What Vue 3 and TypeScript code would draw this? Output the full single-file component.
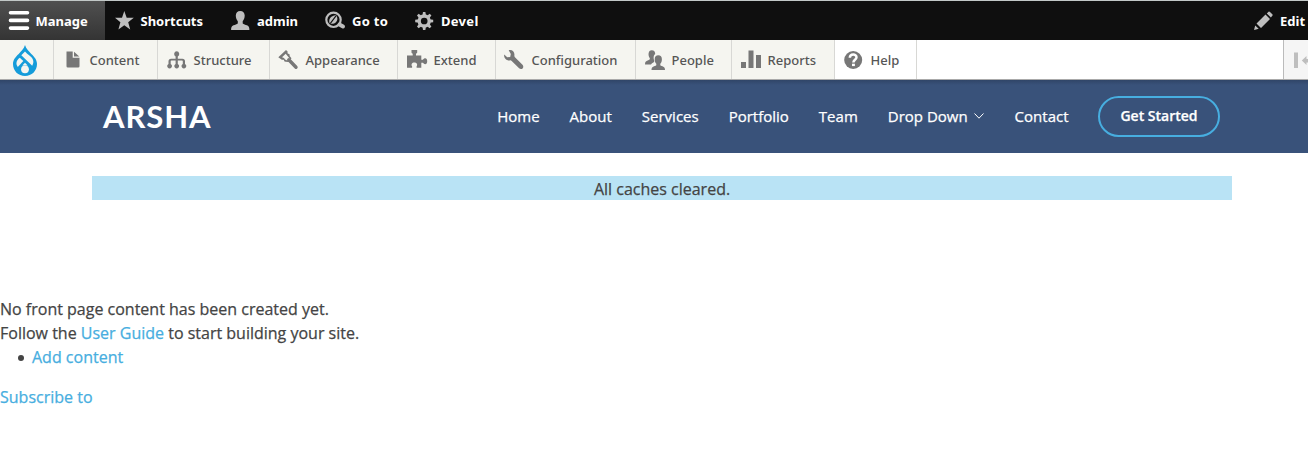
<script setup lang="ts">
interface Tab {
  label: string
  icon: string
  width: number
}

const adminTabs: Tab[] = [
  { label: 'Manage', icon: 'menu', width: 105 },
  { label: 'Shortcuts', icon: 'star', width: 116 },
  { label: 'admin', icon: 'person', width: 94 },
  { label: 'Go to', icon: 'goto', width: 90 },
  { label: 'Devel', icon: 'gear', width: 90 },
]

const trayTabs: Tab[] = [
  { label: 'Content', icon: 'file', width: 104 },
  { label: 'Structure', icon: 'tree', width: 112 },
  { label: 'Appearance', icon: 'brush', width: 128 },
  { label: 'Extend', icon: 'puzzle', width: 98 },
  { label: 'Configuration', icon: 'wrench', width: 140 },
  { label: 'People', icon: 'people', width: 96 },
  { label: 'Reports', icon: 'bars', width: 103 },
  { label: 'Help', icon: 'help', width: 82 },
]

const navLinks: string[] = ['Home', 'About', 'Services', 'Portfolio', 'Team']

const shapes: Record<string, string> = {
  menu: 'M1.500 0h17a1.500 1.500 0 0 1 0 3.600h-17a1.500 1.500 0 0 1 0-3.600zM1.500 7.600h17a1.500 1.500 0 0 1 0 3.600h-17a1.500 1.500 0 0 1 0-3.600zM1.500 15.300h17a1.500 1.500 0 0 1 0 3.600h-17a1.500 1.500 0 0 1 0-3.600z',
  star: 'M9.300 0L11.700 6.800H18.800L13.200 11.200L15.200 18.600L9.300 14.300L3.400 18.600L5.400 11.200L0 6.800H7z',
  person: 'M9.200 0c2.800 0 4.500 1.700 4.500 4.600 0 2.400-.8 4.500-2 5.600v2.200c1 .9 2.700 1.200 4.300 1.900 1.900.9 2.400 2.300 2.400 4.700H.1c0-2.400.5-3.800 2.400-4.700 1.600-.7 3.300-1 4.300-1.900v-2.200c-1.200-1.100-2-3.200-2-5.600C4.800 1.700 6.500 0 9.200 0z',
  file: 'M3.500 1.500h6.200v6.200h6.800v8.500q0 1.300-1.300 1.300H4.800q-1.300 0-1.300-1.300zM11 1.700l5.300 4.700H11z',
  tree: 'M9.700 1.300a2.700 2.700 0 0 1 1.100 5.100v2.300h4.600q2.600 0 2.600 2.500v2.700a2.400 2.400 0 1 1-2.200 0v-2.700q0-.6-.7-.6h-4.300v3.300a2.400 2.400 0 1 1-2.200 0v-3.300H4.400q-.7 0-.7.6v2.700a2.400 2.400 0 1 1-2.200 0v-2.700q0-2.500 2.600-2.500h4.500V6.400A2.700 2.700 0 0 1 9.700 1.300z',
  puzzle: 'M0 5.500h5.700V3.400H5.200Q4.500 3.300 4.500 2.500V0h5.700v2.500q0 .8-.8.9H9v2.100h5.300v4.200h1.700c.6-1 1.200-1.500 2.200-1.500 1.200 0 2 1.300 2 3s-.8 3-2 3c-1 0-1.600-.5-2.200-1.400h-1.700v4.900H9.600v-1.500c1.300-1.500.3-3.800-2.200-3.800s-3.600 2.200-2.300 3.800v1.500H0z',
  wrench: 'M3.700.3C7-.6 9.800 1.700 9.400 5.300c-.1 1 .1 1.500.8 2.200l7.300 7.300c2.300 2.500-.9 5.600-3.400 3.400L6.700 11c-.6-.6-1-.7-2-.6C1.400 10.700-1.400 8-.8 4.500L2.200 7.300l3-.3.600-3z',
  bars: 'M0 12h5v6H0zM7.500.5h5V18h-5zM15 5h5v13h-5z',
}
</script>

<template>
  <div class="page">
    <div class="adminbar">
      <a v-for="(tab, i) in adminTabs" :key="tab.label" class="tab" :class="[tab.icon, { active: i === 0 }]" :style="{ width: tab.width + 'px' }">
        <svg class="icon" viewBox="0 0 20 20">
          <path v-if="shapes[tab.icon]" :d="shapes[tab.icon]" />
          <g v-else-if="tab.icon === 'goto'" fill="none">
            <circle cx="8.500" cy="8.800" r="7.200" class="line" stroke-width="2.200" />
            <path d="M5 12.800C2.700 9 5.500 4.500 11 4.200C14.300 8.500 11.300 13.500 5 12.800z" class="solid" />
            <path d="M5.200 12.700L11 4.800" stroke="#0f0f0f" stroke-width="1.100" />
            <path d="M14.500 13.500L18 15.500" class="line" stroke-width="4" stroke-linecap="round" />
          </g>
          <g v-else fill="none">
            <circle cx="9.200" cy="10" r="5" class="line" stroke-width="3.300" />
            <path v-for="n in 8" :key="n" d="M7.400 4.800L8 1H10.400L11 4.800z" class="solid" :transform="`rotate(${n * 45} 9.200 10)`" />
          </g>
        </svg>
        <span class="label">{{ tab.label }}</span>
      </a>
      <a class="tab edit">
        <svg class="icon" viewBox="0 0 20 20">
          <path d="M0 19L1.200 14.500L4.700 17.800zM2.500 12.500L11.500 3.600L16 8.100L7 17zM12.800 2.500L14.500.8Q15.200.3 16 .9L18.300 3.300Q19 4 18.300 4.800L16.900 6.500z" />
        </svg>
        <span class="label">Edit</span>
      </a>
    </div>

    <div class="tray">
      <a class="drop">
        <svg viewBox="0 0 24 31">
          <path fill="#159cda" d="M12 0C13 4.200 16.200 6.400 18.300 8.900C21.500 11.900 24 14.800 24 19C24 26 18.700 31 12 31S0 26 0 19C0 14.800 2.500 11.900 5.700 8.900C7.800 6.400 11 4.200 12 0z" />
          <g fill="#f5f5f0">
            <path d="M12 6.500L8.300 10.200L19.200 20.700C21.500 17 20.300 13.600 17 11C15 9.300 13.100 8 12 6.500z" />
            <path d="M6.800 12.800L10.300 16L4.800 22C2.600 19 3 15.600 6.800 12.800z" />
            <circle cx="12" cy="24.300" r="3.900" />
            <path d="M12 17.800L14.700 20.500H9.300z" />
          </g>
        </svg>
      </a>
      <a v-for="tab in trayTabs" :key="tab.label" class="tab" :class="{ plain: tab.icon === 'help' }" :style="{ width: tab.width + 'px' }">
        <svg class="icon" viewBox="0 0 20 20">
          <path v-if="shapes[tab.icon]" :d="shapes[tab.icon]" />
          <g v-else-if="tab.icon === 'brush'">
            <path d="M-.7 7.300L7 0L8.600 1.600L8.500 3.200L10.700 4.400L10.600 6L12.500 8.300L9.400 12L6.800 11.700L5.500 11.500L4.800 9.800L2.800 9.700z" />
            <path d="M3 7.300L6.700 3.700L10.800 8.700L8.200 10.400L6 9.600L5 7.900z" fill="#f5f5f0" />
            <path d="M9.800 9.800L17 17.300" fill="none" class="line" stroke-width="3.400" stroke-linecap="round" />
          </g>
          <g v-else-if="tab.icon === 'people'">
            <path d="M6.700.2C9.200.2 10.200 1.700 10.200 4C8.600 5.200 8.200 7.500 9 10C9.600 11.600 9.500 12.200 7 13.200L6 14.500H0C0 11.800.7 11 3.200 10.200C5 9.600 5.100 8.800 4.700 7.900C2.900 5.500 3 .2 6.700.2z" />
            <path d="M13.300 5.300c2.300 0 3.600 1.400 3.600 3.900 0 2-.6 3.600-1.600 4.500v1.600c.8.8 1.900.9 3 1.400 1.300.6 1.700 1.600 1.700 3.300H6.500c0-1.700.4-2.700 1.700-3.300 1.100-.5 2.300-.6 3.100-1.400v-1.600c-1-.9-1.600-2.500-1.600-4.500 0-2.500 1.300-3.900 3.600-3.900z" />
          </g>
          <g v-else>
            <circle cx="9.200" cy="10" r="9" />
            <path d="M5.800 7.700C6 3.500 12.500 3.600 12.500 7.200C12.500 9.800 9.400 9.600 9.400 12.400" fill="none" stroke="#fff" stroke-width="2.500" />
            <path d="M8 13.700h2.900v2.400H8z" fill="#fff" />
          </g>
        </svg>
        <span class="label">{{ tab.label }}</span>
      </a>
      <a class="collapse">
        <svg viewBox="0 0 24 20">
          <path d="M10 1.500h4v15.500h-4zM17.800 9.500L22.500 5V8H24V11.500H22.500V14z" />
        </svg>
      </a>
    </div>

    <header class="header">
      <h1 class="brand">ARSHA</h1>
      <nav class="nav">
        <a v-for="link in navLinks" :key="link" class="link">{{ link }}</a>
        <a class="link dropdown">Drop Down
          <svg viewBox="0 0 12 12"><path d="M1.500 3.500L6 8.200L10.500 3.500" /></svg>
        </a>
        <a class="link">Contact</a>
        <a class="cta">Get Started</a>
      </nav>
    </header>

    <div class="message">All caches cleared.</div>

    <main class="content">
      <p>No front page content has been created yet.</p>
      <p>Follow the <a>User Guide</a> to start building your site.</p>
      <ul><li><a>Add content</a></li></ul>
      <a>Subscribe to</a>
    </main>
  </div>
</template>

<style>
body {
  background: #fff;
  overflow: hidden;
}
</style>

<style scoped>
.page {
  height: 453px;
  overflow: hidden;
  font: 16px/24px 'Open Sans', sans-serif;
  color: #444;
}
.adminbar {
  display: flex;
  height: 40px;
  box-sizing: border-box;
  border-top: 1px solid #c2c8c7;
  background: #0f0f0f;
  color: #fff;
}
.tab {
  display: flex;
  flex: none;
  box-sizing: border-box;
  font-family: 'Noto Sans', sans-serif;
  font-size: 13px;
  line-height: 20px;
  white-space: nowrap;
}
.adminbar .tab {
  padding: 10px 0 0 10px;
  font-weight: 700;
}
.adminbar .active {
  padding-left: 9px;
  background: linear-gradient(#505050, #343434);
}
.icon {
  flex: none;
  width: 20px;
  height: 20px;
  overflow: visible;
  margin-right: 6px;
  fill: #bebebe;
}
.adminbar .active .icon {
  margin-right: 6.5px;
  fill: #fff;
}
.adminbar .line {
  stroke: #bebebe;
}
.adminbar .solid {
  fill: #bebebe;
}
.adminbar .star .icon {
  margin-right: 5.5px;
}
.adminbar .goto .icon {
  margin-right: 7px;
}
.adminbar .goto .label {
  letter-spacing: 0.3px;
}
.adminbar .gear .label {
  letter-spacing: 0.3px;
}
.adminbar .edit {
  margin-left: auto;
  width: 64px;
}
.tray {
  display: flex;
  height: 40px;
  box-sizing: border-box;
  border-bottom: 1px solid #aaa;
  background: #fff;
}
.drop {
  display: flex;
  width: 54px;
  box-sizing: border-box;
  padding: 5px 0 0 13px;
  background: #f5f5f0;
  border-right: 1px solid #d8d8d5;
}
.drop svg {
  width: 24px;
  height: 31px;
}
.tray .tab {
  padding: 10px 0 0 9px;
  background: #f5f5f0;
  border-right: 1px solid #d8d8d5;
  color: #565656;
  font-weight: 500;
}
.tray .plain {
  background: #fff;
}
.tray .icon {
  margin-right: 6.5px;
  fill: #777;
}
.tray .line {
  stroke: #777;
}
.collapse {
  margin-left: auto;
  width: 25px;
  box-sizing: border-box;
  padding-top: 11px;
  border-left: 1px solid #bbb;
  background: #f5f5f5;
}
.collapse svg {
  display: block;
  width: 24px;
  height: 20px;
  fill: #bebebe;
}
.header {
  display: flex;
  align-items: center;
  justify-content: space-between;
  height: 73px;
  box-sizing: border-box;
  padding: 0 88px 0 103px;
  background: linear-gradient(#304568, #39527a 5px);
  color: #fff;
}
.brand {
  margin: 0;
  padding-bottom: 2px;
  font: 700 31px/36px Lato, sans-serif;
  letter-spacing: 0.9px;
}
.nav {
  display: flex;
  align-items: center;
  gap: 30px;
  font-size: 15px;
  font-weight: 500;
  white-space: nowrap;
}
.link {
  padding-bottom: 2px;
}
.dropdown {
  display: flex;
  align-items: center;
  gap: 5px;
}
.dropdown svg {
  width: 12px;
  height: 12px;
  fill: none;
  stroke: #fff;
}
.cta {
  width: 122px;
  height: 41px;
  box-sizing: border-box;
  margin-left: -0.5px;
  border: 2px solid #47aee0;
  border-radius: 21px;
  font-size: 14px;
  font-weight: 600;
  line-height: 36px;
  text-align: center;
}
.message {
  width: 1140px;
  height: 24px;
  box-sizing: border-box;
  margin: 23px 0 0 92px;
  padding-top: 1px;
  background: #b9e3f5;
  text-align: center;
}
.content {
  margin-top: 97px;
}
.content p {
  margin: 0;
}
.content ul {
  margin: 0 0 16px;
  padding: 0;
  list-style: none;
}
.content li {
  display: flex;
  align-items: center;
}
.content li::before {
  content: '';
  width: 6px;
  height: 6px;
  margin: 2px 8px 0 18px;
  border-radius: 50%;
  background: #444;
}
.content a {
  color: #47aee0;
}
.content,
.link,
.cta,
.message {
  -webkit-text-stroke: 0.25px currentColor;
}
</style>
